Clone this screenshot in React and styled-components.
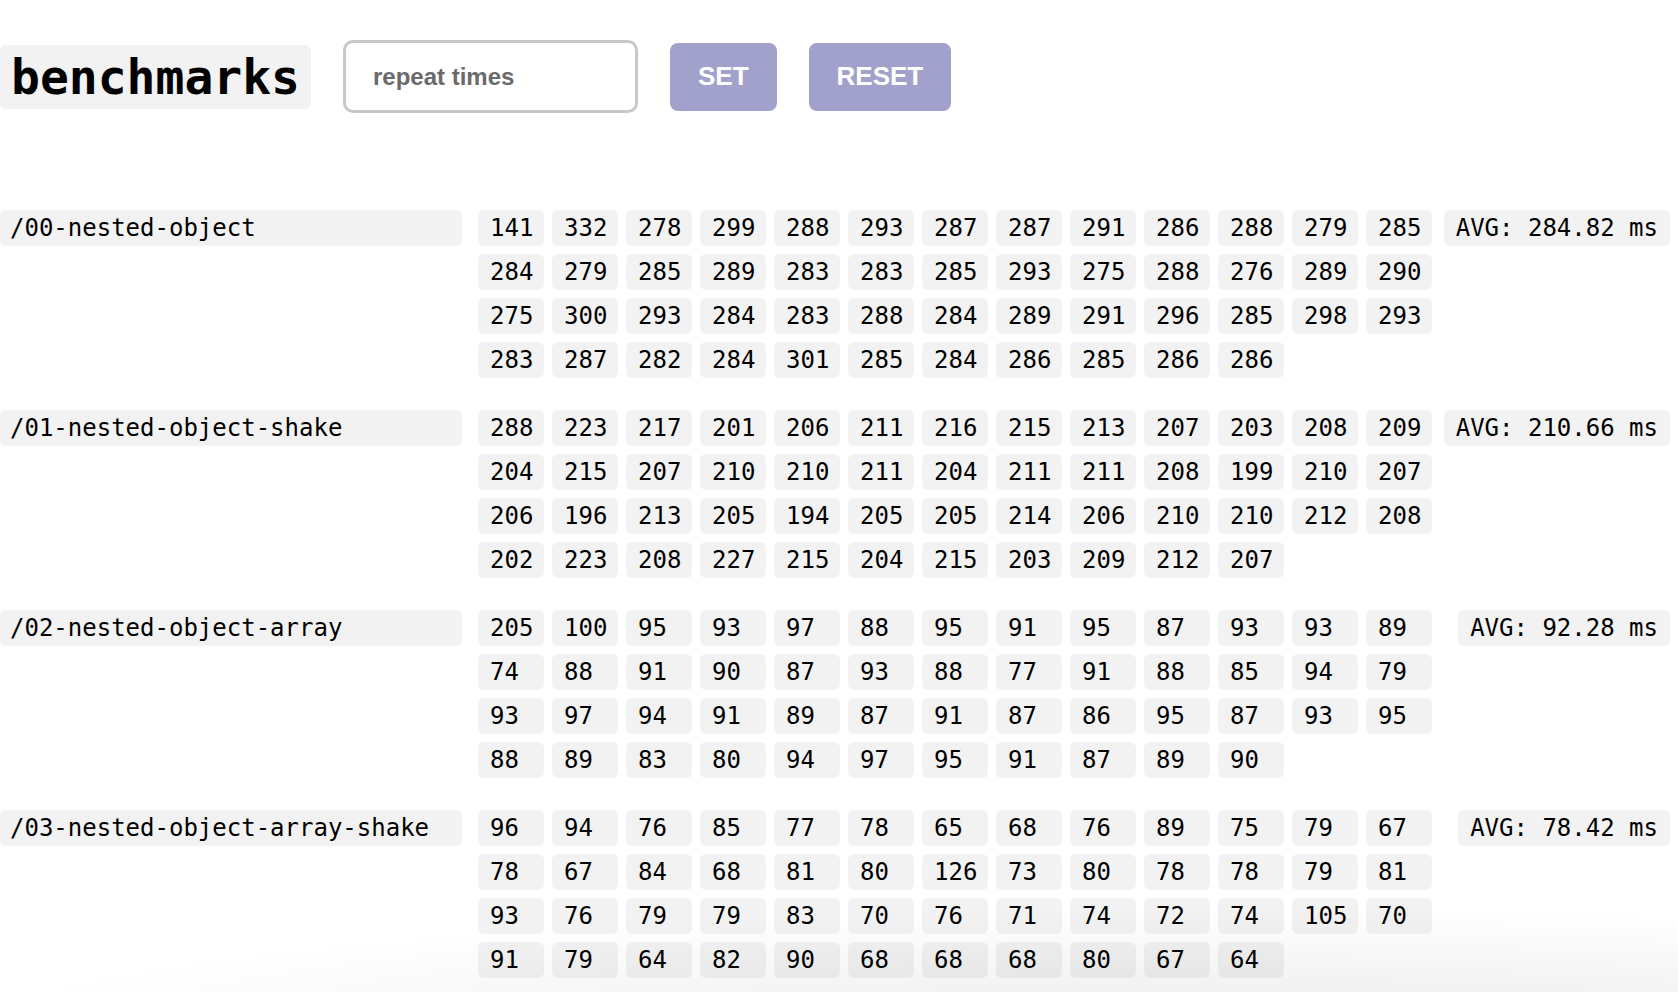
import React from "react";
import styled, { createGlobalStyle } from "styled-components";

const GlobalStyle = createGlobalStyle`
  body {
    margin: 0;
    background: #ffffff;
    font-family: "DejaVu Sans Mono", "Liberation Mono", monospace;
    color: #000000;
  }
`;

const Page = styled.div`
  padding: 40px 8px 40px 0;
`;

const Header = styled.header`
  display: flex;
  align-items: center;
  gap: 32px;
  height: 73px;
`;

const Title = styled.h1`
  margin: 0;
  height: 64px;
  line-height: 64px;
  padding: 0 11px;
  background: #f2f2f2;
  border-radius: 6px;
  font-family: "DejaVu Sans Mono", monospace;
  font-size: 48px;
  font-weight: 700;
`;

const RepeatInput = styled.input`
  box-sizing: border-box;
  width: 295px;
  height: 73px;
  border: 3px solid #c8c8c8;
  border-radius: 10px;
  padding: 0 0 0 27px;
  font-family: "Liberation Sans", Arial, sans-serif;
  font-size: 24px;
  font-weight: 700;
  color: #333;
  outline: none;

  &::placeholder {
    color: #6a6a6a;
  }
`;

const Button = styled.button`
  height: 68px;
  padding: 0 28px;
  border: none;
  border-radius: 8px;
  background: #a2a1cb;
  color: #ffffff;
  font-family: "Liberation Sans", Arial, sans-serif;
  font-size: 26px;
  font-weight: 700;
  cursor: pointer;
`;

const Groups = styled.div`
  display: flex;
  flex-direction: column;
  gap: 32px;
  margin-top: 97px;
`;

const Group = styled.section`
  display: flex;
  align-items: flex-start;
`;

const Name = styled.div`
  flex: 0 0 462px;
  box-sizing: border-box;
  height: 36px;
  line-height: 36px;
  padding: 0 10px;
  background: #f2f2f2;
  border-radius: 6px;
  font-size: 24px;
`;

const Times = styled.div`
  display: grid;
  grid-template-columns: repeat(13, 66px);
  grid-auto-rows: 36px;
  gap: 8px;
  margin-left: 16px;
`;

const Time = styled.span`
  padding: 0 12px;
  line-height: 36px;
  background: #f2f2f2;
  border-radius: 6px;
  font-size: 24px;
`;

const Avg = styled.div`
  margin-left: auto;
  height: 36px;
  line-height: 36px;
  padding: 0 12px;
  background: #f2f2f2;
  border-radius: 6px;
  font-size: 24px;
  white-space: pre;
`;

// faint shadow rising from the bottom edge of the window
const BottomShade = styled.div`
  position: fixed;
  left: 0;
  right: 0;
  bottom: 0;
  height: 90px;
  pointer-events: none;
  background: radial-gradient(
    1300px 120px at 75% 126px,
    rgba(0, 0, 0, 0.08) 0%,
    rgba(0, 0, 0, 0) 100%
  );
`;

const benchmarks = [
  {
    name: "/00-nested-object",
    avg: "284.82",
    times: [
      141, 332, 278, 299, 288, 293, 287, 287, 291, 286, 288, 279, 285,
      284, 279, 285, 289, 283, 283, 285, 293, 275, 288, 276, 289, 290,
      275, 300, 293, 284, 283, 288, 284, 289, 291, 296, 285, 298, 293,
      283, 287, 282, 284, 301, 285, 284, 286, 285, 286, 286
    ]
  },
  {
    name: "/01-nested-object-shake",
    avg: "210.66",
    times: [
      288, 223, 217, 201, 206, 211, 216, 215, 213, 207, 203, 208, 209,
      204, 215, 207, 210, 210, 211, 204, 211, 211, 208, 199, 210, 207,
      206, 196, 213, 205, 194, 205, 205, 214, 206, 210, 210, 212, 208,
      202, 223, 208, 227, 215, 204, 215, 203, 209, 212, 207
    ]
  },
  {
    name: "/02-nested-object-array",
    avg: "92.28",
    times: [
      205, 100, 95, 93, 97, 88, 95, 91, 95, 87, 93, 93, 89,
      74, 88, 91, 90, 87, 93, 88, 77, 91, 88, 85, 94, 79,
      93, 97, 94, 91, 89, 87, 91, 87, 86, 95, 87, 93, 95,
      88, 89, 83, 80, 94, 97, 95, 91, 87, 89, 90
    ]
  },
  {
    name: "/03-nested-object-array-shake",
    avg: "78.42",
    times: [
      96, 94, 76, 85, 77, 78, 65, 68, 76, 89, 75, 79, 67,
      78, 67, 84, 68, 81, 80, 126, 73, 80, 78, 78, 79, 81,
      93, 76, 79, 79, 83, 70, 76, 71, 74, 72, 74, 105, 70,
      91, 79, 64, 82, 90, 68, 68, 68, 80, 67, 64
    ]
  }
];

export default function App() {
  return (
    <>
      <GlobalStyle />
      <Page>
        <Header>
          <Title>benchmarks</Title>
          <RepeatInput placeholder="repeat times" />
          <Button>SET</Button>
          <Button>RESET</Button>
        </Header>
        <Groups>
          {benchmarks.map(bench => (
            <Group key={bench.name}>
              <Name>{bench.name}</Name>
              <Times>
                {bench.times.map((t, i) => (
                  <Time key={i}>{t}</Time>
                ))}
              </Times>
              <Avg>AVG: {bench.avg} ms</Avg>
            </Group>
          ))}
        </Groups>
      </Page>
      <BottomShade />
    </>
  );
}
